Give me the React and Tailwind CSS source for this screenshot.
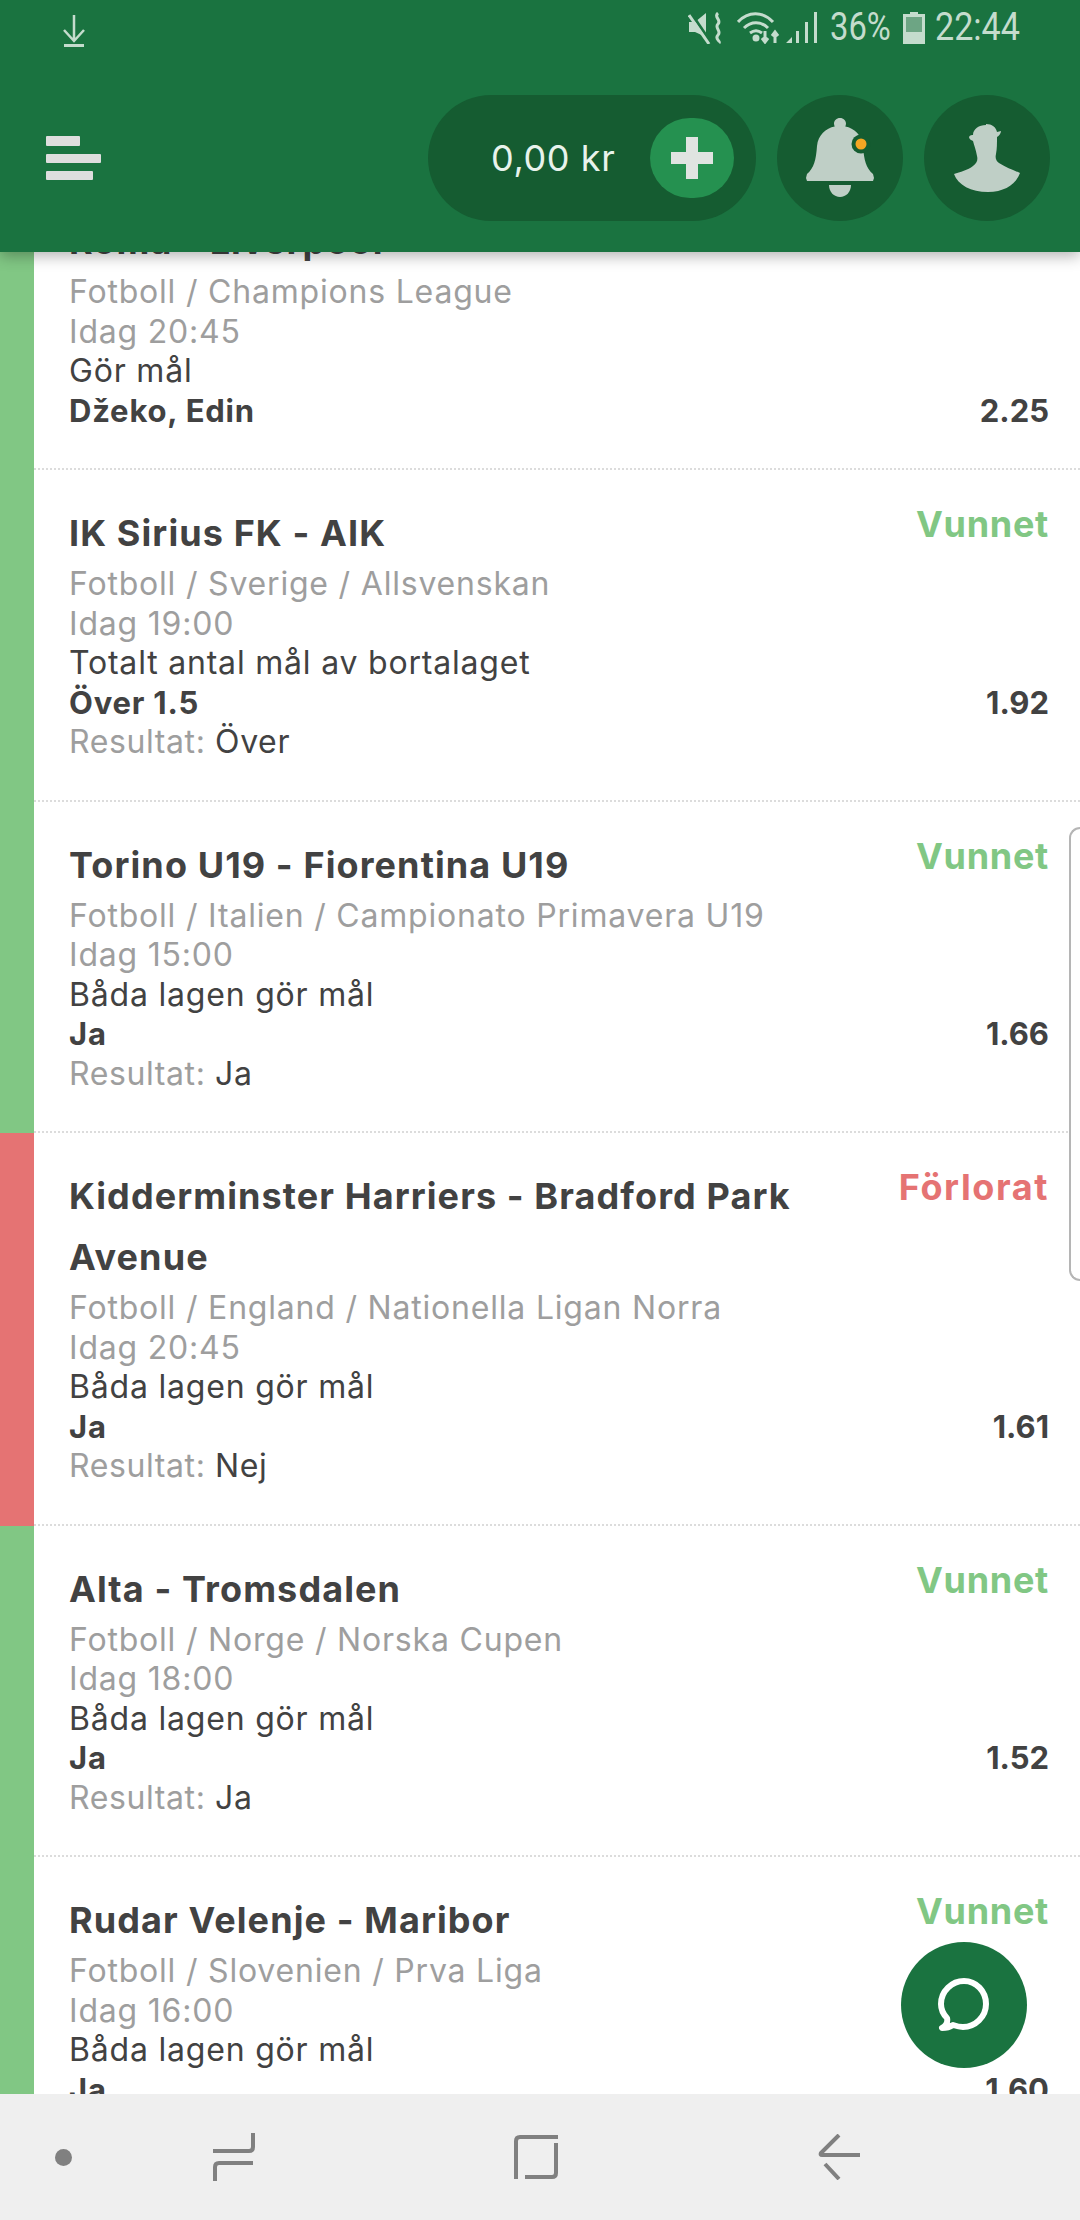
const bets = [
  { title: 'Roma - Liverpool', league: 'Fotboll / Champions League', time: 'Idag 20:45', market: 'Gör mål', pick: 'Džeko, Edin', odds: '2.25', first: true },
  { title: 'IK Sirius FK - AIK', league: 'Fotboll / Sverige / Allsvenskan', time: 'Idag 19:00', market: 'Totalt antal mål av bortalaget', pick: 'Över 1.5', odds: '1.92', status: 'Vunnet', result: 'Över' },
  { title: 'Torino U19 - Fiorentina U19', league: 'Fotboll / Italien / Campionato Primavera U19', time: 'Idag 15:00', market: 'Båda lagen gör mål', pick: 'Ja', odds: '1.66', status: 'Vunnet', result: 'Ja' },
  { title: 'Kidderminster Harriers - Bradford Park Avenue', league: 'Fotboll / England / Nationella Ligan Norra', time: 'Idag 20:45', market: 'Båda lagen gör mål', pick: 'Ja', odds: '1.61', status: 'Förlorat', result: 'Nej', lost: true },
  { title: 'Alta - Tromsdalen', league: 'Fotboll / Norge / Norska Cupen', time: 'Idag 18:00', market: 'Båda lagen gör mål', pick: 'Ja', odds: '1.52', status: 'Vunnet', result: 'Ja' },
  { title: 'Rudar Velenje - Maribor', league: 'Fotboll / Slovenien / Prva Liga', time: 'Idag 16:00', market: 'Båda lagen gör mål', pick: 'Ja', odds: '1.60', status: 'Vunnet', result: 'Ja' },
]

function BetRow({ bet }) {
  return (
    <div className={`flex shrink-0 ${bet.first ? '-mt-[74px]' : ''}`}>
      <div className={`w-[34px] shrink-0 ${bet.lost ? 'bg-[#e57373]' : 'bg-[#81c784]'}`} />
      <div className={`flex-1 border-b-2 border-dotted border-[#dcdcdc] pt-[33px] pr-[31px] pl-[35px] ${bet.first ? 'pb-[38px]' : 'pb-[38px]'}`}>
        <div className="flex items-start justify-between">
          <div className="w-[760px] text-[36px] leading-[61px] font-bold tracking-[1.1px] text-[#424242]">{bet.title}</div>
          {bet.status && (
            <div className={`text-[36px] leading-[42px] font-bold ${bet.lost ? 'tracking-[1.6px] text-[#e57373]' : 'tracking-[0.7px] text-[#81c784]'}`}>{bet.status}</div>
          )}
        </div>
        <div className="text-[32px] leading-[39.5px] tracking-[0.8px] text-[#9e9e9e]">{bet.league}</div>
        <div className="text-[32px] leading-[39.5px] tracking-[0.8px] text-[#9e9e9e]">{bet.time}</div>
        <div className="text-[32px] leading-[39.5px] tracking-[0.8px] text-[#424242]">{bet.market}</div>
        <div className="flex justify-between text-[31px] leading-[39.5px] font-bold text-[#424242]">
          <span className="tracking-[0.8px]">{bet.pick}</span>
          <span>{bet.odds}</span>
        </div>
        {bet.result && (
          <div className="text-[32px] leading-[39.5px] tracking-[0.6px] text-[#9e9e9e]">
            Resultat: <span className="text-[#424242]">{bet.result}</span>
          </div>
        )}
      </div>
    </div>
  )
}

function StatusIcons() {
  return (
    <div className="flex items-center text-[#c4dccd]">
      <svg width="36" height="32" viewBox="0 0 36 32" fill="none">
        <path d="M1 10h6l11-9v24L7 20H1z" fill="currentColor" />
        <path d="M3 1l21 31" stroke="#1a7340" strokeWidth="3" />
        <path d="M1 3l20 29" stroke="currentColor" strokeWidth="3" />
        <path d="M30 1c-5 4 4 7 0 11s4 7 0 11 3 6 1 8" stroke="currentColor" strokeWidth="3" />
      </svg>
      <svg className="ml-[13px]" width="44" height="32" viewBox="0 0 44 32" fill="none" stroke="currentColor" strokeWidth="3">
        <path d="M1 10c10-11 25-11 35 0M7 16c7-7 17-7 24 0M13 21c4-3 8-3 12 0" />
        <circle cx="19" cy="26" r="2" fill="currentColor" />
        <path d="M28 19v11M25 26l3 4 3-4M38 31V21M35 24l3-4 3 4" />
      </svg>
      <svg className="ml-[5px]" width="32" height="32" viewBox="0 0 32 32" fill="currentColor">
        <path d="M0 31l6-6v6zM10 31V19h3v12zM19 31V10h3v21zM28 31V0h3v31z" />
      </svg>
      <span className="ml-[12px] w-[61px] origin-left scale-x-[0.84] font-['Roboto',sans-serif] text-[39px] leading-none whitespace-nowrap">36%</span>
      <svg className="ml-[12px]" width="22" height="32" viewBox="0 0 22 32">
        <path d="M7 0h8v2h7v30H0V2h7z" fill="currentColor" />
        <path d="M3 5h16v15H3z" fill="#6da584" />
      </svg>
      <span className="ml-[10px] w-[84px] origin-left scale-x-[0.875] font-['Roboto',sans-serif] text-[39px] leading-none whitespace-nowrap">22:44</span>
    </div>
  )
}

export default function App() {
  return (
    <div className="relative flex h-[2220px] w-[1080px] flex-col overflow-hidden bg-white font-['Inter',sans-serif]">
      {/* Header */}
      <header className="relative z-10 h-[252px] shrink-0 bg-[#1a7340] shadow-[0_4px_14px_rgba(0,0,0,0.3)]">
        <div className="flex h-[47px] items-end justify-between pr-[61px] pl-[63px]">
          <svg width="22" height="32" viewBox="0 0 22 32" fill="none" stroke="#c4dccd" strokeWidth="2.5">
            <path d="M11 0v26M1 15l10 11 10-11" />
            <path d="M1 30.500h20" strokeWidth="3" />
          </svg>
          <StatusIcons />
        </div>
        <div className="mt-[48px] flex items-center justify-between pr-[30px] pl-[46px]">
          <div className="flex flex-col gap-2">
            <div className="h-[10px] w-[34px] rounded-[1px] bg-[#dedede]" />
            <div className="h-[9px] w-[55px] rounded-[1px] bg-[#dedede]" />
            <div className="h-[9px] w-[47px] rounded-[1px] bg-[#dedede]" />
          </div>
          <div className="flex items-center gap-[21px]">
            <div className="flex h-[126px] w-[328px] items-center justify-between rounded-full bg-[#155c31] pr-[22px] pl-[63px]">
              <span className="text-[36px] tracking-[0.6px] text-[#e8f3ec]">0,00 kr</span>
              <div className="flex h-[80px] w-[84px] items-center justify-center rounded-full bg-[#259150]">
                <svg width="42" height="42" viewBox="0 0 42 42" fill="#e0e4e1">
                  <path d="M15 0h12v15h15v12H27v15H15V27H0V15h15z" />
                </svg>
              </div>
            </div>
            <div className="flex h-[126px] w-[126px] items-center justify-center rounded-full bg-[#155c31]">
              <svg width="68" height="80" viewBox="0 0 68 80">
                <path fill="#bfcfc6" d="M34 0c3.500 0 6 2.500 6 5.500 0 1-.3 2-.7 3C48 10 56 17 57 28c1 14 3 22 10 28l1 4-1 3H1l-1-3 1-4c7-6 9-14 10-28C12 17 20 10 28.700 8.500c-.4-1-.7-2-.7-3C28 2.500 30.500 0 34 0z" />
                <path fill="#bfcfc6" d="M23 67h22c0 7-5 12-11 12s-11-5-11-12z" />
                <circle cx="55" cy="26" r="9.500" fill="#155c31" />
                <circle cx="55" cy="26" r="5.500" fill="#f5a623" />
              </svg>
            </div>
            <div className="flex h-[126px] w-[126px] items-center justify-center rounded-full bg-[#155c31]">
              <svg width="66" height="68" viewBox="0 0 66 68">
                <path fill="#bfcfc6" d="M32 0c6 0 10 3 11 8l4-1c0 2-2 5-4 6 0 6 0 12-1 17-1 4 0 7 3 9 6 4 14 7 21 10-4 11-15 19-32 19S4 61 0 50c6-2 14-4 19-8 4-3 5-6 4-10-1-6-3-11-4-15-2-1-4-2-4-4 1-2 3-2 4-2 0-6 6-10 13-10z" />
              </svg>
            </div>
          </div>
        </div>
      </header>

      {/* Bets */}
      <main className="flex min-h-0 flex-1 flex-col overflow-hidden">
        {bets.map((bet) => (
          <BetRow key={bet.title} bet={bet} />
        ))}
      </main>

      {/* Bottom nav */}
      <nav className="z-10 flex h-[126px] shrink-0 items-center bg-[#efefef] pl-[55px]">
        <div className="h-[17px] w-[17px] rounded-full bg-[#808080]" />
        <svg className="ml-[141px]" width="42" height="48" viewBox="0 0 42 48" fill="none" stroke="#808080" strokeWidth="4">
          <path d="M40 0v14q0 4-4 4H0M40 30H6q-4 0-4 4v14" />
        </svg>
        <svg className="ml-[259px]" width="44" height="44" viewBox="0 0 44 44" fill="none" stroke="#808080" strokeWidth="4">
          <path d="M2 44V6q0-4 4-4h38M42 8v30q0 4-4 4H11" />
        </svg>
        <svg className="ml-[260px]" width="42" height="46" viewBox="0 0 42 46" fill="none" stroke="#808080" strokeWidth="4">
          <path d="M21 1L3 19q-1 2 1 2h38M7 30l14 15" />
        </svg>
      </nav>

      {/* Scroll handle */}
      <div className="absolute top-[827px] right-0 h-[454px] w-[11px] rounded-l-[14px] border-y-2 border-l-2 border-[#b5b5b5] bg-white" />

      {/* Chat button */}
      <button className="absolute top-[1942px] left-[901px] z-20 flex h-[126px] w-[126px] items-center justify-center rounded-full bg-[#1a7340]">
        <svg width="52" height="54" viewBox="0 0 52 54" fill="none" stroke="#fff" strokeWidth="6" strokeLinecap="round" strokeLinejoin="round">
          <path d="M4 50c4 0 8-1 11-3 3 1 6 2 10 2 12 0 23-10 23-23S38 3 26 3 3 13 3 26c0 6 3 11 6 14 1 4-1 8-5 10z" />
        </svg>
      </button>
    </div>
  )
}
